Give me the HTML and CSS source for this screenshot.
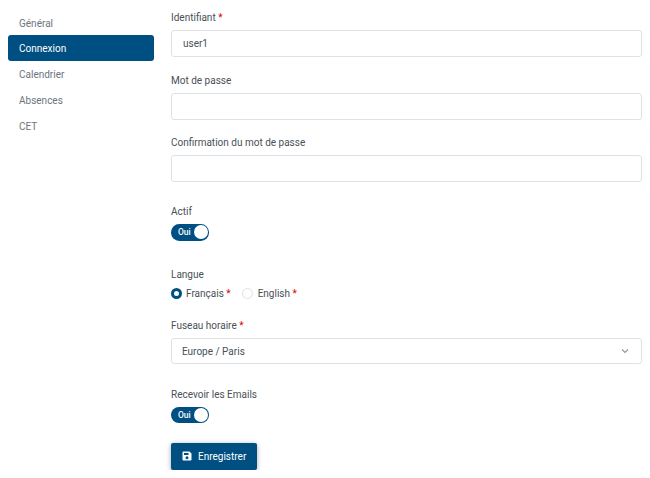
FILE: index.html
```html
<!DOCTYPE html>
<html lang="fr">
  <head>
    <meta charset="UTF-8" />
    <meta name="viewport" content="width=device-width, initial-scale=1.0" />
    <link rel="stylesheet" href="styles.css">
    <title>Connexion</title>
  </head>
  <body>
    <div class="page">
      <ul class="side-nav">
        <li class="side-item">Général</li>
        <li class="side-item active">Connexion</li>
        <li class="side-item">Calendrier</li>
        <li class="side-item">Absences</li>
        <li class="side-item">CET</li>
      </ul>
      <form class="user-form">
        <div class="field">
          <div class="label">Identifiant <span class="req">*</span></div>
          <div class="input">user1</div>
        </div>
        <div class="field">
          <div class="label">Mot de passe</div>
          <div class="input"></div>
        </div>
        <div class="field">
          <div class="label">Confirmation du mot de passe</div>
          <div class="input"></div>
        </div>
        <div class="field field-wide">
          <div class="label">Actif</div>
          <div class="toggle"><span class="toggle-text">Oui</span><span class="knob"></span></div>
        </div>
        <div class="field field-radio">
          <div class="label">Langue</div>
          <div class="radios">
            <span class="radio radio-on"></span>
            <span class="radio-label">Français <span class="req">*</span></span>
            <span class="radio"></span>
            <span class="radio-label">English <span class="req">*</span></span>
          </div>
        </div>
        <div class="field field-zone">
          <div class="label">Fuseau horaire <span class="req">*</span></div>
          <div class="input select">
            <span>Europe / Paris</span>
            <svg class="chevron" width="8" height="6" viewBox="0 0 8 6"><path d="M1 1.5 L4 4.5 L7 1.5" fill="none" stroke="#8a97a6" stroke-width="1.1"/></svg>
          </div>
        </div>
        <div class="field field-wide">
          <div class="label">Recevoir les Emails</div>
          <div class="toggle"><span class="toggle-text">Oui</span><span class="knob"></span></div>
        </div>
        <button type="button" class="save-btn">
          <svg width="10" height="10" viewBox="0 0 10 10"><path fill="#fff" fill-rule="evenodd" d="M1 0.5 H7.4 L9.5 2.6 V8.5 A1 1 0 0 1 8.5 9.5 H1.5 A1 1 0 0 1 0.5 8.5 V1.5 A1 1 0 0 1 1 0.5 Z M2 2 V4 H6.5 V2 Z M5 5.3 A1.5 1.5 0 1 0 5 8.3 A1.5 1.5 0 1 0 5 5.3 Z"/></svg>
          Enregistrer
        </button>
      </form>
    </div>
  </body>
</html>
```

FILE: styles.css
```css
body {
  margin: 0;
  background: #fff;
  color: #495057;
  font-family: Roboto, "Noto Sans", sans-serif;
  font-size: 10px;
}

.page {
  display: flex;
  align-items: flex-start;
  padding: 10px 8px 0 8px;
}

.side-nav {
  list-style: none;
  margin: -0.4px 0 0 0;
  padding: 0;
  width: 146px;
  flex-shrink: 0;
}
.side-item {
  height: 25.82px;
  line-height: 27px;
  padding-left: 11px;
  color: #6c757d;
  border-radius: 3px;
}
.side-item.active {
  background: #004f83;
  color: #fff;
}

.user-form {
  margin-left: 17px;
  padding-top: 1px;
  width: 471px;
}

.field {
  margin-bottom: 16.5px;
}
.field-wide {
  margin-top: 23px;
}
.field-radio {
  margin-top: 27.5px;
  margin-bottom: 18.5px;
}
.field-zone {
  margin-bottom: 23.5px;
}
.field-zone .label {
  margin-bottom: 6.5px;
}

.label {
  height: 13px;
  line-height: 13px;
  margin-bottom: 6px;
}
.req {
  color: #e00000;
}

.input {
  box-sizing: border-box;
  height: 27px;
  line-height: 25px;
  padding: 0 11px;
  border: 1px solid #dee2e6;
  border-radius: 3px;
  background: #fff;
}
.select {
  display: flex;
  align-items: center;
  justify-content: space-between;
  height: 26px;
  padding-left: 10px;
}
.chevron {
  margin-right: 1px;
}

.toggle {
  display: flex;
  align-items: center;
  justify-content: space-between;
  box-sizing: border-box;
  width: 38px;
  height: 16.5px;
  margin-top: 1.5px;
  padding: 0 1px 0 7px;
  border-radius: 8.25px;
  background: #004f83;
}
.toggle-text {
  color: #fff;
  font-size: 8.5px;
  font-weight: 500;
}
.knob {
  width: 14px;
  height: 14px;
  border-radius: 50%;
  background: #fff;
}

.radios {
  display: flex;
  align-items: center;
  height: 13px;
  margin-top: 4px;
}
.radio {
  box-sizing: border-box;
  width: 11px;
  height: 11px;
  border: 1px solid #dee2e6;
  border-radius: 50%;
  margin-right: 4px;
}
.radio-label + .radio {
  margin-right: 5px;
}
.radio-on {
  border: 3.5px solid #004f83;
}
.radio-label {
  margin-right: 11px;
}

.save-btn {
  display: flex;
  align-items: center;
  gap: 6px;
  height: 27px;
  width: 86px;
  margin-top: 19.5px;
  padding: 0 0 0 11px;
  border: none;
  border-radius: 2px;
  background: #004f83;
  color: #fff;
  font: inherit;
  box-shadow: 0 1px 5px rgba(0, 0, 0, 0.35);
}
```
